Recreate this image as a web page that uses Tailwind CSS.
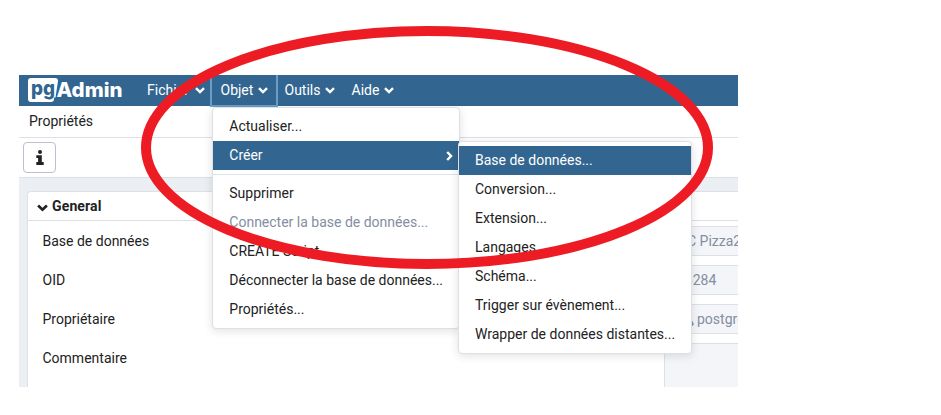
<!DOCTYPE html>
<html lang="fr">
<head>
<meta charset="utf-8">
<title>pgAdmin</title>
<script src="https://cdn.jsdelivr.net/npm/@tailwindcss/browser@4"></script>
</head>
<body class="relative h-[415px] w-[941px] overflow-hidden bg-white pl-[19px] pt-[75px] font-['Roboto','Liberation_Sans',sans-serif] text-[14px] leading-[21px] text-[#222222]">
<svg class="hidden">
  <symbol id="down" viewBox="0 0 10 7"><path d="M1 1.2 5 5.1 9 1.2" fill="none" stroke="currentColor" stroke-width="2.4"/></symbol>
</svg>
<div class="relative h-[312px] w-[719px]">
  <div class="flex h-full flex-col overflow-hidden">
    <header class="flex h-[31px] shrink-0 items-stretch bg-[#326690] text-white">
      <div class="flex w-[120px] items-center pl-[9px]">
        <svg class="h-[29px] w-[96px]" viewBox="0 -2 96 29" font-family="Inter, sans-serif" font-weight="800">
          <path d="M3 0H27Q30 0 30 3L27.5 19.5H26V21Q26 24 23 24H3Q0 24 0 21V3Q0 0 3 0Z" fill="#fff"/>
          <text x="3" y="17" font-size="20" textLength="24" lengthAdjust="spacingAndGlyphs" fill="#326690">pg</text>
          <text x="28.5" y="18.6" font-size="20" textLength="66" lengthAdjust="spacingAndGlyphs" fill="#fff">Admin</text>
        </svg>
      </div>
      <nav class="flex items-stretch">
        <div class="flex w-[71px] items-center gap-1 pl-2">Fichier<svg class="ml-0.5 h-[7px] w-[10px]"><use href="#down"/></svg></div>
        <div class="flex w-[69px] items-center gap-[5px] pl-[10.5px]">Objet<svg class="h-[7px] w-[10px]"><use href="#down"/></svg></div>
        <div class="flex w-[67px] items-center gap-[5px] pl-[5.5px]">Outils<svg class="h-[7px] w-[10px]"><use href="#down"/></svg></div>
        <div class="flex items-center gap-[5px] pl-[5.5px]">Aide<svg class="h-[7px] w-[10px]"><use href="#down"/></svg></div>
      </nav>
    </header>
    <div class="flex h-8 shrink-0 items-center border-b border-[#dde0e6] pl-[10px]">Propriétés</div>
    <div class="flex h-10 shrink-0 items-center border-b border-[#dde0e6] pl-1">
      <button class="flex h-[31px] w-[33px] items-center justify-center rounded border border-[#bac1cd]">
        <svg class="mb-px h-[15px] w-[8px]" viewBox="0 0 8 15" fill="#222"><circle cx="4" cy="2" r="2"/><path d="M0.3 5.3h5.5v6.7H7.7v3H0.3v-3h1.8V8H0.3z"/></svg>
      </button>
    </div>
    <main class="flex-1 bg-[#ebeef3] pl-2 pt-[13px]">
      <section class="h-[220px] rounded-tl border-l border-t border-[#dde0e6] bg-white">
        <div class="flex h-[29px] items-center gap-1 border-b border-[#dde0e6] pl-[9px] font-bold tracking-[0.01em]"><svg class="mt-[3px] h-[8px] w-[11px]" viewBox="0 0 10 7"><use href="#down"/></svg>General</div>
        <div class="flex flex-col gap-[9px] whitespace-nowrap pl-[14.5px] pt-[5px]">
          <div class="flex h-[30px] items-center"><span class="w-[621.5px] shrink-0">Base de données</span><span class="flex h-full min-w-0 flex-1 items-center border border-r-0 border-[#dde0e6] bg-[#f3f5f9] pl-[22px] text-[#848ea0]">C Pizza2</span></div>
          <div class="flex h-[30px] items-center"><span class="w-[621.5px] shrink-0">OID</span><span class="flex h-full min-w-0 flex-1 items-center border border-r-0 border-[#dde0e6] bg-[#f3f5f9] pl-[12px] text-[#848ea0]">16284</span></div>
          <div class="flex h-[30px] items-center"><span class="w-[621.5px] shrink-0">Propriétaire</span><span class="flex h-full min-w-0 flex-1 items-center border border-r-0 border-[#dde0e6] bg-[#f3f5f9] pl-[18px] text-[#848ea0]"><svg class="mr-[3px] h-3 w-[11px] shrink-0 translate-y-[1px]" viewBox="0 0 11 12"><path d="M1 11Q1 6 5.5 6T10 11Z" fill="#fff" stroke="#326dc0"/><circle cx="5.5" cy="3" r="2.5" fill="#326dc0"/></svg>postgres</span></div>
          <div class="flex h-[50px]"><span class="w-[621.5px] shrink-0 pt-[5px]">Commentaire</span><span class="h-full flex-1 border border-r-0 border-[#dde0e6] bg-[#f3f5f9]"></span></div>
        </div>
      </section>
    </main>
  </div>
  <div class="absolute left-[191px] top-0 h-8 w-[68px] border-2 border-t-0 border-[#6b9dc9]"></div>
  <div class="absolute left-[193px] top-8 h-[222px] w-[248px] rounded border border-[#dde0e6] bg-white py-1 shadow-[0_2px_10px_#0000001f]">
    <div class="flex h-[29px] items-center pl-[16.3px]">Actualiser...</div>
    <div class="flex h-[29px] items-center justify-between bg-[#326690] pl-[16.3px] pr-[6px] text-white">Créer<svg class="h-[10px] w-[7px]" viewBox="0 0 7 10"><path d="M1.2 1 5.1 5 1.2 9" fill="none" stroke="#fff" stroke-width="2.4"/></svg></div>
    <div class="my-1 h-px bg-[#dde0e6]"></div>
    <div class="flex h-[29px] items-center pl-[16.3px]">Supprimer</div>
    <div class="flex h-[29px] items-center pl-[16.3px] text-[#848ea0]">Connecter la base de données...</div>
    <div class="flex h-[29px] items-center pl-[16.3px]">CREATE Script</div>
    <div class="flex h-[29px] items-center pl-[16.3px]">Déconnecter la base de données...</div>
    <div class="flex h-[29px] items-center pl-[16.3px]">Propriétés...</div>
  </div>
  <div class="absolute left-[439px] top-[66px] h-[213px] w-[234px] rounded border border-[#dde0e6] bg-white py-1 shadow-[0_2px_10px_#0000001f]">
    <div class="flex h-[29px] items-center bg-[#326690] pl-4 text-white">Base de données...</div>
    <div class="flex h-[29px] items-center pl-4">Conversion...</div>
    <div class="flex h-[29px] items-center pl-4">Extension...</div>
    <div class="flex h-[29px] items-center pl-4">Langages...</div>
    <div class="flex h-[29px] items-center pl-4">Schéma...</div>
    <div class="flex h-[29px] items-center pl-4">Trigger sur évènement...</div>
    <div class="flex h-[29px] items-center pl-4">Wrapper de données distantes...</div>
  </div>
</div>
<svg class="absolute left-0 top-0 h-[415px] w-[941px]" viewBox="0 0 941 415"><ellipse cx="427" cy="147.5" rx="281" ry="116.5" fill="none" stroke="#ed1c24" stroke-width="10"/></svg>
</body>
</html>
